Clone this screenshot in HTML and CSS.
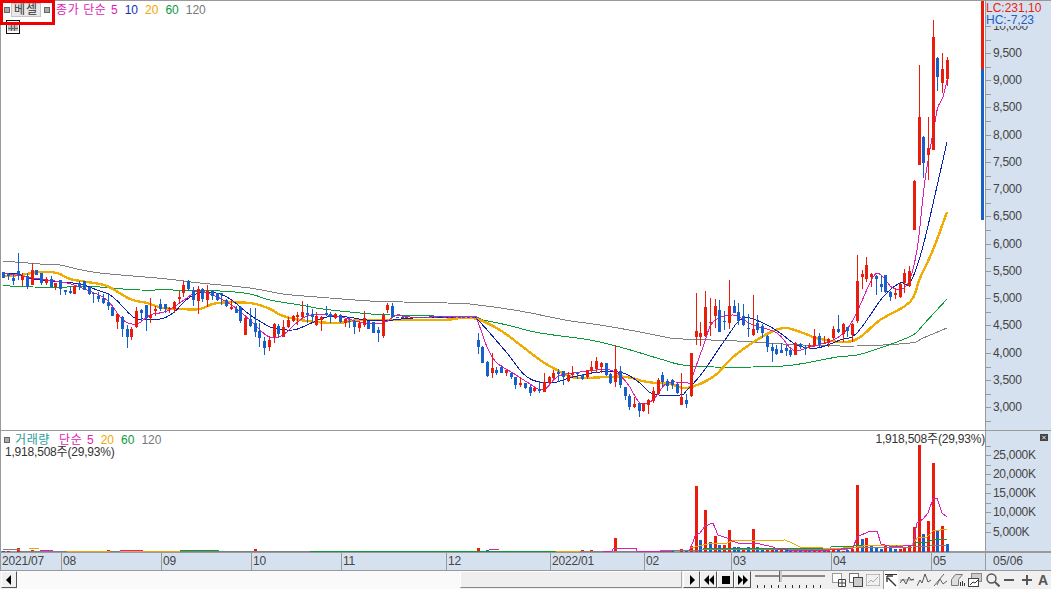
FILE: index.html

```html
<!DOCTYPE html>
<html lang="ko">
<head>
    <meta charset="UTF-8">
    <meta name="viewport" content="width=device-width, initial-scale=1.0">
    <title>차트</title>
    <link rel="stylesheet" href="styles.css">
</head>
<body>
    <div class="chart">
        <section class="pane price_pane">
            <svg class="plot" id="price_plot" viewBox="0 1 981 429"></svg>
            <div class="legend">
                <span class="handle"></span>
                <span class="name_btn">베셀</span>
                <span class="handle handle_right"></span>
                <span class="c_mag title_gap">종가 단순</span>
                <span class="c_mag">5</span>
                <span class="c_navy">10</span>
                <span class="c_org">20</span>
                <span class="c_grn">60</span>
                <span class="c_gry">120</span>
            </div>
            <svg class="table_icon" viewBox="0 0 14 14">
                <rect x="0.5" y="0.5" width="13" height="13" fill="#fff" stroke="#111"/>
                <rect x="2" y="2" width="10" height="2" fill="#888"/>
                <rect x="2" y="5" width="10" height="6" fill="#bbb"/>
                <path d="M5.5 5v6M8.5 5v6M2 8.5h10" stroke="#666"/>
            </svg>
            <div class="highlight"></div>
        </section>
        <aside class="axis price_axis">
            <div class="range_bar"><div class="range_hi"></div><div class="range_lo"></div></div>
            <div class="lc">LC:231,10</div>
            <div class="hc">HC:-7,23</div>
            <div id="price_ticks"></div>
        </aside>

        <section class="pane vol_pane">
            <svg class="plot" id="vol_plot" viewBox="0 431 985 122"></svg>
            <div class="vol_legend">
                <span class="handle"></span>
                <span class="c_teal vol_name">거래량</span>
                <span class="c_mag vol_title">단순</span>
                <span class="c_mag">5</span>
                <span class="c_org">20</span>
                <span class="c_grn">60</span>
                <span class="c_gry">120</span>
            </div>
            <div class="vol_left">1,918,508주(29,93%)</div>
            <div class="vol_right">1,918,508주(29,93%)</div>
        </section>
        <aside class="axis vol_axis">
            <span class="close_btn">
                <svg viewBox="0 0 8 8"><path d="M2 2l4 4M6 2l-4 4" stroke="#fff"/></svg>
            </span>
            <div id="vol_ticks"></div>
        </aside>

        <div class="dates">
            <span class="date">2021/07</span>
            <span class="date">08</span>
            <span class="date">09</span>
            <span class="date">10</span>
            <span class="date">11</span>
            <span class="date">12</span>
            <span class="date">2022/01</span>
            <span class="date">02</span>
            <span class="date">03</span>
            <span class="date">04</span>
            <span class="date last_month">05</span>
        </div>
        <div class="axis date_end">05/06</div>

        <div class="toolbar">
            <button class="tool_btn scroll_btn"><svg viewBox="0 0 8 10"><path d="M6 0v10L1 5z"/></svg></button>
            <div class="track"></div>
            <div class="thumb"></div>
            <button class="tool_btn play_btn"><svg viewBox="0 0 10 10"><path d="M3 0v10l5-5z"/></svg></button>
            <button class="tool_btn play_btn"><svg viewBox="0 0 10 10"><path d="M5 0v10L0 5zM10 0v10L5 5z"/></svg></button>
            <button class="tool_btn play_btn"><svg viewBox="0 0 10 10"><path d="M1 1h8v8H1z"/></svg></button>
            <button class="tool_btn play_btn"><svg viewBox="0 0 10 10"><path d="M0 0v10l5-5zM5 0v10l5-5z"/></svg></button>
            <div class="slider">
                <div class="slider_line"></div>
                <div class="slider_knob"></div>
                <div class="slider_ticks"></div>
            </div>
            <div class="icons">
                <svg class="ico" viewBox="0 0 14 14"><rect x="0.5" y="0.5" width="9" height="9" fill="#fff" stroke="#999"/><path d="M6.5 6.5h7v7h-7zM10 6.5v7M6.5 10h7" fill="#fff" stroke="#444"/></svg>
                <svg class="ico" viewBox="0 0 14 14"><rect x="0.5" y="0.5" width="9" height="9" fill="#fff" stroke="#777"/><rect x="4.5" y="4.5" width="9" height="9" fill="#ccc" stroke="#444"/></svg>
                <svg class="ico" viewBox="0 0 14 14" fill="none"><path d="M0.5 1.5h13M0.5 12.5h13M0.5 1.5v11M13.5 1.5v11" stroke="#888" stroke-dasharray="1 1"/><path d="M2 10l3-3 2 2 5-5" stroke="#aaa"/></svg>
                <span class="ico_on"><svg class="ico" viewBox="0 0 14 14" fill="none"><path d="M1 1.5h12" stroke="#333"/><path d="M12 13L4 5M3 3v6M3 3h6" stroke="#333" stroke-width="1.4"/></svg></span>
                <svg class="ico" viewBox="0 0 14 14" fill="none"><path d="M0 7h14" stroke="#999"/><path d="M0 10l3-4 3 5 3-7 2 3 3-1" stroke="#555"/></svg>
                <svg class="ico" viewBox="0 0 14 14" fill="none"><path d="M0 13l3-6 2 3 3-9 3 8 3-2" stroke="#555"/></svg>
                <svg class="ico" viewBox="0 0 14 14" fill="none"><path d="M0 13L10 1M3 12l3-6 3 5 4-3" stroke="#666"/></svg>
                <svg class="ico" viewBox="0 0 14 14"><path d="M0.5 6.5l4-5h7l-4 5v6h-7z" fill="#ddd" stroke="#777"/><path d="M9.5 9v4M11.5 8v5M13.5 10v3" stroke="#333"/></svg>
                <svg class="ico" viewBox="0 0 14 14"><rect x="3.5" y="0.5" width="10" height="8" fill="#ccc" stroke="#888"/><rect x="0.5" y="5.5" width="10" height="8" fill="#fff" stroke="#444"/><path d="M2 12l3-3 2 1 3-3" fill="none" stroke="#333"/></svg>
                <svg class="ico mag_ico" viewBox="0 0 14 14" fill="none"><circle cx="5.5" cy="5.5" r="4.5" stroke="#555" stroke-width="1.4"/><path d="M9 9l4.5 4.5" stroke="#555" stroke-width="2"/></svg>
                <svg class="ico ctl_ico" viewBox="0 0 12 12"><path d="M1 5h10v2H1z" fill="#555"/></svg>
                <svg class="ico ctl_ico plus_ico" viewBox="0 0 12 12"><path d="M1 5h10v2H1zM5 1h2v10H5z" fill="#555"/></svg>
                <span class="font_ico">A</span>
            </div>
        </div>
    </div>
    <script src="chart.js"></script>
</body>
</html>
```

FILE: styles.css

```css
* {
    box-sizing: border-box;
}
body {
    margin: 0;
    width: 1051px;
    height: 589px;
    overflow: hidden;
    background-color: #fff;
    font-family: "Liberation Sans", "Noto Sans CJK KR", sans-serif;
    font-size: 12px;
    color: #444;
}
.chart {
    display: grid;
    grid-template-columns: 985px 66px;
    grid-template-rows: 431px 122px 18px 18px;
    width: 1051px;
    height: 589px;
}
.pane {
    position: relative;
    background-color: #fff;
    border-left: 1px solid #999;
}
.price_pane {
    border-top: 1px solid #999;
    border-bottom: 1px solid #999;
}
.vol_pane {
    border-bottom: 2px solid #999;
}
.plot {
    position: absolute;
    top: 0;
    display: block;
    left: -1px;
}
.price_pane .plot {
    width: 981px;
    height: 429px;
}
.vol_pane .plot {
    width: 985px;
    height: 122px;
}
.legend {
    position: absolute;
    top: 2px;
    left: 3px;
    display: flex;
    align-items: center;
    gap: 7px;
    height: 14px;
    line-height: 14px;
}
.handle {
    width: 6px;
    height: 6px;
    background-color: #aaa;
    border: 1px solid #666;
    flex-shrink: 0;
}
.name_btn {
    width: 30px;
    height: 14px;
    margin-left: -6px;
    background-color: #e8e8e8;
    border: 1px solid #c4c4c4;
    text-align: center;
    line-height: 12px;
    letter-spacing: 1px;
    color: #333;
}
.handle_right {
    margin-left: -4px;
}
.title_gap {
    width: 49px;
    margin-left: -1px;
    margin-right: -1px;
    white-space: nowrap;
    letter-spacing: 0.6px;
}
.c_mag { color: #e01cb4; }
.c_navy { color: #0f2fb8; }
.c_org { color: #f0a800; }
.c_grn { color: #0a9a38; }
.c_gry { color: #777; }
.c_teal { color: #2a9a98; }
.table_icon {
    position: absolute;
    top: 19px;
    left: 5px;
    width: 14px;
    height: 14px;
}
.highlight {
    position: absolute;
    top: -1px;
    left: -1px;
    width: 55px;
    height: 25px;
    border: 3px solid #f00000;
}
.axis {
    position: relative;
    background-color: #d6e1ef;
    border-left: 1px solid #999;
}
.price_axis {
    border-top: 1px solid #999;
    border-bottom: 1px solid #999;
}
.vol_axis {
    border-bottom: 2px solid #999;
}
.range_bar {
    position: absolute;
    top: 0;
    left: -5px;
    width: 3px;
    height: 219px;
    display: flex;
    flex-direction: column;
}
.range_hi {
    height: 68px;
    background-color: #ea1c0c;
}
.range_lo {
    flex: 1;
    background-color: #1760cc;
}
.lc, .hc {
    position: absolute;
    left: 0;
    width: 60px;
    z-index: 1;
    font-size: 12px;
    line-height: 12px;
    background-color: #d6e1ef;
}
.lc {
    top: 1px;
    color: #ea1c0c;
}
.hc {
    top: 13px;
    color: #1760cc;
}
.tick {
    position: absolute;
    left: 0;
    width: 5px;
    height: 1px;
    background-color: #999;
}
.tick_label {
    position: absolute;
    left: 7px;
    line-height: 12px;
    font-size: 12px;
    letter-spacing: -0.3px;
}
.vol_legend {
    position: absolute;
    top: 2px;
    left: 3px;
    display: flex;
    align-items: center;
    gap: 7px;
    height: 14px;
    line-height: 14px;
}
.vol_name {
    margin-left: -2px;
    width: 36px;
    letter-spacing: 0.6px;
}
.vol_title {
    margin-left: 1px;
    margin-right: -3px;
    width: 24px;
    letter-spacing: 0.6px;
}
.vol_left, .vol_right {
    position: absolute;
    line-height: 12px;
    letter-spacing: -0.2px;
    color: #333;
}
.vol_left {
    top: 15px;
    left: 4px;
}
.vol_right {
    top: 2px;
    right: 0;
}
.close_btn {
    position: absolute;
    top: 3px;
    right: 3px;
    width: 8px;
    height: 7px;
    background-color: #444;
    display: flex;
}
.close_btn svg {
    width: 8px;
    height: 7px;
}
.dates {
    display: grid;
    grid-template-columns: 61px 100px 90px 90px 105px 104px 94px 87px 100px 100px 1fr;
    background-color: #d6e1ef;
    border-left: 1px solid #999;
    border-bottom: 1px solid #999;
    line-height: 17px;
}
.date {
    padding-left: 1px;
    border-right: 1px solid #999;
    font-size: 12px;
    letter-spacing: -0.2px;
}
.last_month {
    border-right: 0;
}
.date_end {
    border-bottom: 1px solid #999;
    padding-left: 7px;
    line-height: 17px;
}
.toolbar {
    grid-column: 1 / 3;
    display: flex;
    align-items: stretch;
    background-color: #f0f0f0;
}
.toolbar > * {
    flex-shrink: 0;
}
.tool_btn {
    display: flex;
    align-items: center;
    justify-content: center;
    padding: 0;
    height: 17px;
    background-color: #f0f0f0;
    border: 1px solid;
    border-color: #fff #555 #555 #fff;
}
.tool_btn svg {
    width: 10px;
    height: 10px;
    fill: #000;
}
.scroll_btn {
    width: 16px;
    margin-left: 1px;
}
.track {
    width: 443px;
    background-color: #fafafa;
    background-image: radial-gradient(#e4e4e4 0.5px, transparent 0.6px);
    background-size: 2px 2px;
}
.thumb {
    width: 222px;
    height: 17px;
    background-color: #efefef;
    border: 1px solid;
    border-color: #fff #aaa #888 #fff;
}
.play_btn {
    width: 17px;
}
.thumb + .play_btn {
    margin-left: 1px;
}
.slider {
    position: relative;
    width: 70px;
    margin: 0 7px 0 4px;
}
.slider_line {
    position: absolute;
    top: 4px;
    left: 0;
    right: 0;
    height: 2px;
    background-color: #888;
}
.slider_knob {
    position: absolute;
    top: 0;
    left: 24px;
    width: 3px;
    height: 11px;
    background-color: #ccc;
    border-left: 1px solid #666;
}
.slider_ticks {
    position: absolute;
    left: 2px;
    right: 2px;
    bottom: 1px;
    height: 3px;
    background-image: repeating-linear-gradient(90deg, #333 0 1px, transparent 1px 7px);
}
.icons {
    display: flex;
    align-items: center;
    gap: 3px;
}
.ico {
    display: block;
    width: 14px;
    height: 14px;
    flex-shrink: 0;
}
.ico_on {
    display: flex;
    align-items: center;
    justify-content: center;
    width: 15px;
    height: 18px;
    margin-right: -1px;
    background-color: #fff;
    border-left: 1px solid #999;
}
.mag_ico {
    margin-left: 1px;
}
.ctl_ico {
    width: 12px;
    height: 12px;
}
.plus_ico {
    margin-left: 3px;
}
.font_ico {
    margin-left: 2px;
    font-size: 14px;
    font-weight: bold;
    color: #555;
}
```

FILE: chart.js

```js
const NS = "http://www.w3.org/2000/svg";
const RED = "#ea1c0c";
const BLUE = "#1760cc";

// candle rows are [colour, body top, body bottom, wick top, wick bottom]
// measured at 3x, so y = y0 + value / 3
const candle_blocks = [
    { y0: 250, rows: [
        ["b",66,84,66,84],["b",72,78,70,90],["b",84,92,72,104],["b",63,76,10,90],["r",78,90,70,108],
        ["b",78,112,70,116],["r",60,105,40,105],["b",60,75,60,75],["b",70,98,70,106],["r",88,98,80,104],
        ["b",88,112,78,112],["r",98,112,98,120],["b",90,118,90,134],["b",120,126,120,134],["b",122,130,110,132],
        ["r",108,132,108,132],["b",100,110,94,120],["b",94,120,94,120],["b",112,132,110,135],["b",130,132,130,158],
        ["b",138,148,125,155],["b",145,158,133,162],["b",155,168,130,180],["b",170,198,170,198],["r",192,216,188,236],
        ["b",202,238,198,262],["b",236,260,226,294],["r",236,260,230,270],["r",184,232,172,234],["b",180,188,178,214],
        ["b",166,204,164,242],["r",196,204,144,218],["r",176,182,168,198],["b",162,176,148,182],["b",162,176,162,188],
        ["r",174,176,170,190],["r",156,178,154,188],["r",140,148,122,158],["r",105,130,92,140],["b",92,118,90,122],
        ["b",120,150,112,168],["r",118,152,108,192],["b",118,146,114,156],["r",122,150,106,170],["b",124,138,120,150],
        ["b",130,150,128,152],["b",130,136,128,166],["b",150,168,146,170],["r",170,176,150,180],["b",176,188,168,190],
        ["b",172,214,168,220],["r",204,254,198,256]
    ] },
    { y0: 280, rows: [
        ["b",118,138,85,140],["b",130,155,85,170],["b",152,175,130,200],["b",182,205,170,225],["r",180,200,168,212],
        ["r",132,172,128,190],["b",138,162,132,175],["r",140,170,120,172],["r",120,142,112,145],["r",108,122,104,126],
        ["r",106,112,97,135],["r",96,110,63,118],["b",100,106,72,130],["b",102,112,88,128],["r",108,136,96,138],
        ["r",110,120,108,152],["b",98,106,78,108],["b",102,110,96,128],["r",102,114,98,118],["b",105,125,103,128],
        ["r",116,128,116,140],["b",124,126,112,144],["b",124,142,120,162],["r",130,144,122,156],["r",114,136,94,140],
        ["b",124,146,122,148],["b",126,158,126,160],["b",150,158,140,186],["r",106,168,98,174],["r",75,90,68,98],
        ["b",78,112,70,115]
    ] },
    // flat stretch around the year end
    { y0: 280, rows: [
        ["b",111,113,111,113],["b",112,114,112,114],["b",112,114,112,114],["r",111,113,111,113],["b",112,114,112,114],
        ["b",112,114,112,114],["b",112,114,112,114],["b",109,111,109,111],["b",112,114,112,114],["b",109,111,109,111],
        ["b",112,114,112,114],["b",112,114,112,114],["b",112,114,112,114],["b",112,114,112,114],["b",112,114,112,114],
        ["b",112,114,112,114],["b",112,114,112,114]
    ] },
    { y0: 320, rows: [
        ["b",60,80,40,102],["b",80,128,78,130],["b",126,168,124,170],["r",144,160,100,174],["b",150,158,140,165],
        ["b",142,158,135,160],["r",150,158,150,168],["b",160,170,156,176],["b",172,194,170,206],["r",190,194,170,200],
        ["b",190,204,188,206],["b",200,218,196,228],["r",203,212,200,216],["b",206,214,182,218],["r",186,216,160,216],
        ["r",172,190,168,192],["r",160,174,150,178],["b",156,162,146,186],["b",154,170,152,194],["r",166,184,156,186],
        ["r",160,166,138,170],["b",158,160,156,178],["b",164,176,162,180],["r",150,172,150,178],["r",142,154,124,158],
        ["r",124,148,110,160],["r",130,142,126,158],["b",130,164,128,168],["b",162,190,160,192],["r",148,186,76,200],
        ["b",154,194,138,204],["b",202,228,200,240],["b",228,260,222,270],["r",252,262,232,264],["b",250,272,248,290],
        ["r",250,272,248,275],["r",240,254,236,282],["r",214,244,200,250],["r",180,222,174,226],["b",166,186,156,200],
        ["b",182,198,176,212],["b",180,196,176,206],["b",192,220,190,222],["r",232,254,160,256],["b",240,252,222,264],
        ["r",100,228,100,230]
    ] },
    { y0: 250, rows: [
        ["r",244,260,128,285],["r",250,260,216,288],["r",172,258,122,262],["r",216,218,144,258],["r",168,198,148,234],
        ["b",180,246,150,246],["b",212,216,182,240],["r",168,218,90,236],["b",168,188,150,190],["b",186,212,160,226],
        ["b",198,226,162,228],["b",234,238,192,260],["r",238,254,135,258],["b",220,240,196,248],["b",228,248,222,264],
        ["b",258,292,254,305],["b",290,302,278,336],["b",296,312,286,316],["b",300,308,280,310],["b",294,304,284,318],
        ["b",300,316,296,320],["r",280,314,276,316],["b",282,292,278,298],["b",290,298,286,316],["r",286,290,280,296],
        ["r",258,288,238,292],["b",258,282,250,290],["r",278,280,258,282],["r",268,280,264,290],["r",238,264,228,268],
        ["b",236,246,196,250],["r",222,252,218,276],["b",232,244,230,260],["r",222,256,218,276],["r",94,212,16,218],
        ["r",72,80,60,118],["r",44,86,22,96],["r",72,80,70,110],["b",78,88,76,134],["b",102,110,76,126],
        ["b",76,126,74,128],["b",126,140,122,152],["r",130,134,114,148],["r",102,142,98,144],["r",70,100,58,128],
        ["r",64,108,48,110]
    ] },
    { y0: 0, rows: [
        ["r",543,690,540,690],["r",351,495,195,495],["b",411,489,408,534],["r",444,465,351,540],["r",111,450,60,450],
        ["b",174,232,171,272],["r",208,250,158,278],["r",180,237,170,258]
    ] }
];

const price_lines = [
    { color: "#808080", width: 1, pts: [3,262,15,262,40,264,60,265,77,269,100,273,133,276,167,279,200,283,250,288,283,294,317,297,370,301,403,302,447,303,470,304,520,311,565,320,600,325,640,332,670,338,683,339,737,341,767,343,803,345,857,346,910,343,923,338,947,328] },
    { color: "#0a9a38", width: 1, pts: [3,285,10,286,33,287,67,287,100,287,123,289,140,290,173,290,220,291,250,294,270,300,300,305,323,309,360,313,390,315,470,317,483,320,507,325,540,333,590,340,627,349,657,358,690,366,753,367,793,365,837,357,857,355,883,347,913,335,923,325,947,299] },
    { color: "#f0ac00", width: 2.4, pts: [3,276,20,275,40,272,57,273,70,279,87,282,107,286,130,299,147,303,163,308,180,309,200,309,217,303,250,303,270,309,283,316,307,321,337,323,363,320,440,320,460,318,470,318,480,320,500,330,523,347,543,362,567,375,580,378,607,377,627,377,647,382,670,384,687,388,713,377,733,357,760,338,783,328,803,333,820,339,853,341,880,320,910,302,920,278,933,250,947,212] },
    { color: "#0b22a8", width: 1, pts: [3,273,17,274,33,279,60,282,80,284,97,290,113,297,133,317,143,319,160,319,173,313,190,297,207,292,227,297,250,315,263,323,273,328,293,330,307,325,327,317,347,317,367,320,393,320,413,318,470,317,478,320,507,353,527,377,550,383,573,377,600,372,623,373,640,383,653,394,680,395,687,390,703,372,727,337,743,318,763,323,780,333,797,345,817,348,840,340,857,333,883,297,900,283,910,283,922,250,935,195,947,142] },
    { color: "#e01cb4", width: 1, pts: [3,273,33,278,67,283,87,290,107,300,123,320,137,324,150,315,167,311,187,298,200,291,227,302,250,320,260,330,270,337,283,335,300,320,313,315,337,316,363,323,383,323,397,315,410,317,470,317,477,320,487,347,497,363,513,373,527,382,543,390,557,377,573,373,610,370,627,383,640,403,653,400,667,383,688,383,691,380,703,347,713,322,733,315,753,325,777,333,793,350,810,347,837,338,853,320,873,277,882,276,893,288,907,285,917,250,925,180,935,122,938,107,943,97,947,80] }
];

// volume bars from index 143 on, [colour, height]
const late_volume = [
    ["r",3],["b",1],["r",6],["r",66],["b",12],["r",42],["b",10],["r",16],["b",7],["r",7],["r",22],
    ["b",5],["b",5],["r",4],["b",5],["r",23],["b",5],["b",3],["r",3],["r",3],["b",3],["r",3],["b",3],
    ["b",2],["r",2],["b",1],["r",1],["b",1],["r",5],["r",2],["b",1],["r",1],["r",2],["b",2],["r",1],["b",2],["r",3],
    ["r",67],["b",13],["r",14],["b",7],["b",5],["b",3],["r",6],["b",5],["b",3],["r",3],["r",5],["r",6],
    ["r",25],["r",107],["b",18],["r",31],["r",89],["b",21],["r",26],["b",8]
];
// a few taller bars in the quiet months, index -> [colour, height]
const early_volume = {
    3: ["r",4], 6: ["r",2], 22: ["r",2], 53: ["r",3], 100: ["r",4], 102: ["b",2], 129: ["r",14], 122: ["r",2], 124: ["r",2], 140: ["r",2]
};

// the volume averages are broken into runs where they stop being hidden by the baseline
const vol_lines = [
    { color: "#808080", width: 1, pts: [3,549,19,549,20,551,660,551,700,550,850,549,852,548,913,547,947,545] },
    { color: "#0a9a38", width: 1, pts: [180,550,219,550] },
    { color: "#0a9a38", width: 1, pts: [310,551,556,551] },
    { color: "#0a9a38", width: 1, pts: [703,549,830,548,832,546,853,546,857,545,913,545,918,542,927,542,933,540,947,539] },
    { color: "#f0a800", width: 1, pts: [29,548,39,548] },
    { color: "#f0a800", width: 1, pts: [67,551,110,551] },
    { color: "#f0a800", width: 1, pts: [120,551,180,551] },
    { color: "#f0a800", width: 1, pts: [556,551,580,551] },
    { color: "#f0a800", width: 1, pts: [690,548,695,547,703,545,713,543,727,543,732,541,785,540,792,543,800,547,807,547,823,548,843,548,857,547,863,546,897,545,912,545,917,538,927,537,933,531,947,529] },
    { color: "#e01cb4", width: 1, pts: [40,550,53,550] },
    { color: "#e01cb4", width: 1, pts: [120,550,143,550] },
    { color: "#e01cb4", width: 1, pts: [489,549,499,549] },
    { color: "#e01cb4", width: 1, pts: [603,551,612,551,613,549,636,548,637,551,672,551] },
    { color: "#e01cb4", width: 1, pts: [689,551,693,542,695,536,700,533,705,526,713,523,718,535,727,538,732,541,738,543,760,544,773,547,777,549,788,550,807,550,830,550,853,548,857,537,868,532,877,531,881,544,893,547,913,545,917,523,923,519,928,513,933,499,937,498,942,513,947,517] }
];

const price_labels = [10000,9500,9000,8500,8000,7500,7000,6500,6000,5500,5000,4500,4000,3500,3000];

function candleX(i) {
    return Math.round(3.3 + 4.742 * i);
}

function addRect(svg, x, y, w, h, color) {
    let r = document.createElementNS(NS, "rect");
    r.setAttribute("x", x);
    r.setAttribute("y", y);
    r.setAttribute("width", w);
    r.setAttribute("height", h);
    r.setAttribute("fill", color);
    svg.appendChild(r);
}

// rounds the measured corners off so the averages read as curves
function smooth(pts) {
    let out = [];
    let n = pts.length / 2;
    let at = (i, k) => pts[Math.max(0, Math.min(n - 1, i)) * 2 + k];
    for (let i = 0; i < n - 1; i++) {
        for (let s = 0; s < 4; s++) {
            let t = s / 4;
            for (let k = 0; k < 2; k++) {
                let a = at(i - 1, k), b = at(i, k), c = at(i + 1, k), d = at(i + 2, k);
                out.push(0.5 * (2 * b + (c - a) * t + (2 * a - 5 * b + 4 * c - d) * t * t + (3 * b - a - 3 * c + d) * t * t * t));
            }
        }
    }
    out.push(pts[pts.length - 2], pts[pts.length - 1]);
    return out;
}

function addLine(svg, color, width, pts) {
    let p = document.createElementNS(NS, "polyline");
    let coords = [];
    for (let i = 0; i < pts.length; i += 2) {
        coords.push(pts[i] + "," + pts[i + 1]);
    }
    p.setAttribute("points", coords.join(" "));
    p.setAttribute("fill", "none");
    p.setAttribute("stroke", color);
    p.setAttribute("stroke-width", width);
    svg.appendChild(p);
}

function drawPrice() {
    let svg = document.getElementById("price_plot");
    svg.setAttribute("shape-rendering", "crispEdges");
    price_lines.forEach(l => addLine(svg, l.color, l.width, smooth(l.pts)));

    let i = 0;
    candle_blocks.forEach(block => {
        block.rows.forEach(row => {
            let color = row[0] == "r" ? RED : BLUE;
            let x = candleX(i);
            let top = Math.round(block.y0 + row[1] / 3);
            let bottom = Math.round(block.y0 + row[2] / 3);
            let hi = Math.round(block.y0 + row[3] / 3);
            let lo = Math.round(block.y0 + row[4] / 3);
            addRect(svg, x, hi, 1, Math.max(lo - hi, 1), color);
            addRect(svg, x - 1, top, 3, Math.max(bottom - top, 1), color);
            i++;
        });
    });
}

function drawVolume() {
    let svg = document.getElementById("vol_plot");
    svg.setAttribute("shape-rendering", "crispEdges");
    for (let i = 0; i < 200; i++) {
        let bar;
        if (i >= 143) bar = late_volume[i - 143];
        else if (early_volume[i]) bar = early_volume[i];
        else if (i % 3 == 0) bar = ["b", 1];
        else if (i % 3 == 1 && i < 60) bar = ["r", 1];
        if (bar) {
            addRect(svg, candleX(i) - 1, 552 - bar[1], 3, bar[1], bar[0] == "r" ? RED : BLUE);
        }
    }
    vol_lines.forEach(l => addLine(svg, l.color, l.width, l.pts));
}

function addTick(box, y, label) {
    let t = document.createElement("div");
    t.className = "tick";
    t.style.top = y + "px";
    box.appendChild(t);
    if (label) {
        let s = document.createElement("div");
        s.className = "tick_label";
        s.style.top = (y - 6) + "px";
        s.textContent = label;
        box.appendChild(s);
    }
}

function drawAxes() {
    let pbox = document.getElementById("price_ticks");
    price_labels.forEach((price, n) => {
        // 500 won is 27.23px
        let y = Math.round(52 + (n - 1) * 27.23);
        addTick(pbox, y, price.toLocaleString("en-US"));
        addTick(pbox, y + 14);
    });
    let vbox = document.getElementById("vol_ticks");
    [[25000,24],[20000,43],[15000,62],[10000,81],[5000,101]].forEach(item => {
        addTick(vbox, item[1], item[0].toLocaleString("en-US") + "K");
        addTick(vbox, item[1] - 9);
    });
    addTick(vbox, 120);
}

drawPrice();
drawVolume();
drawAxes();
```
